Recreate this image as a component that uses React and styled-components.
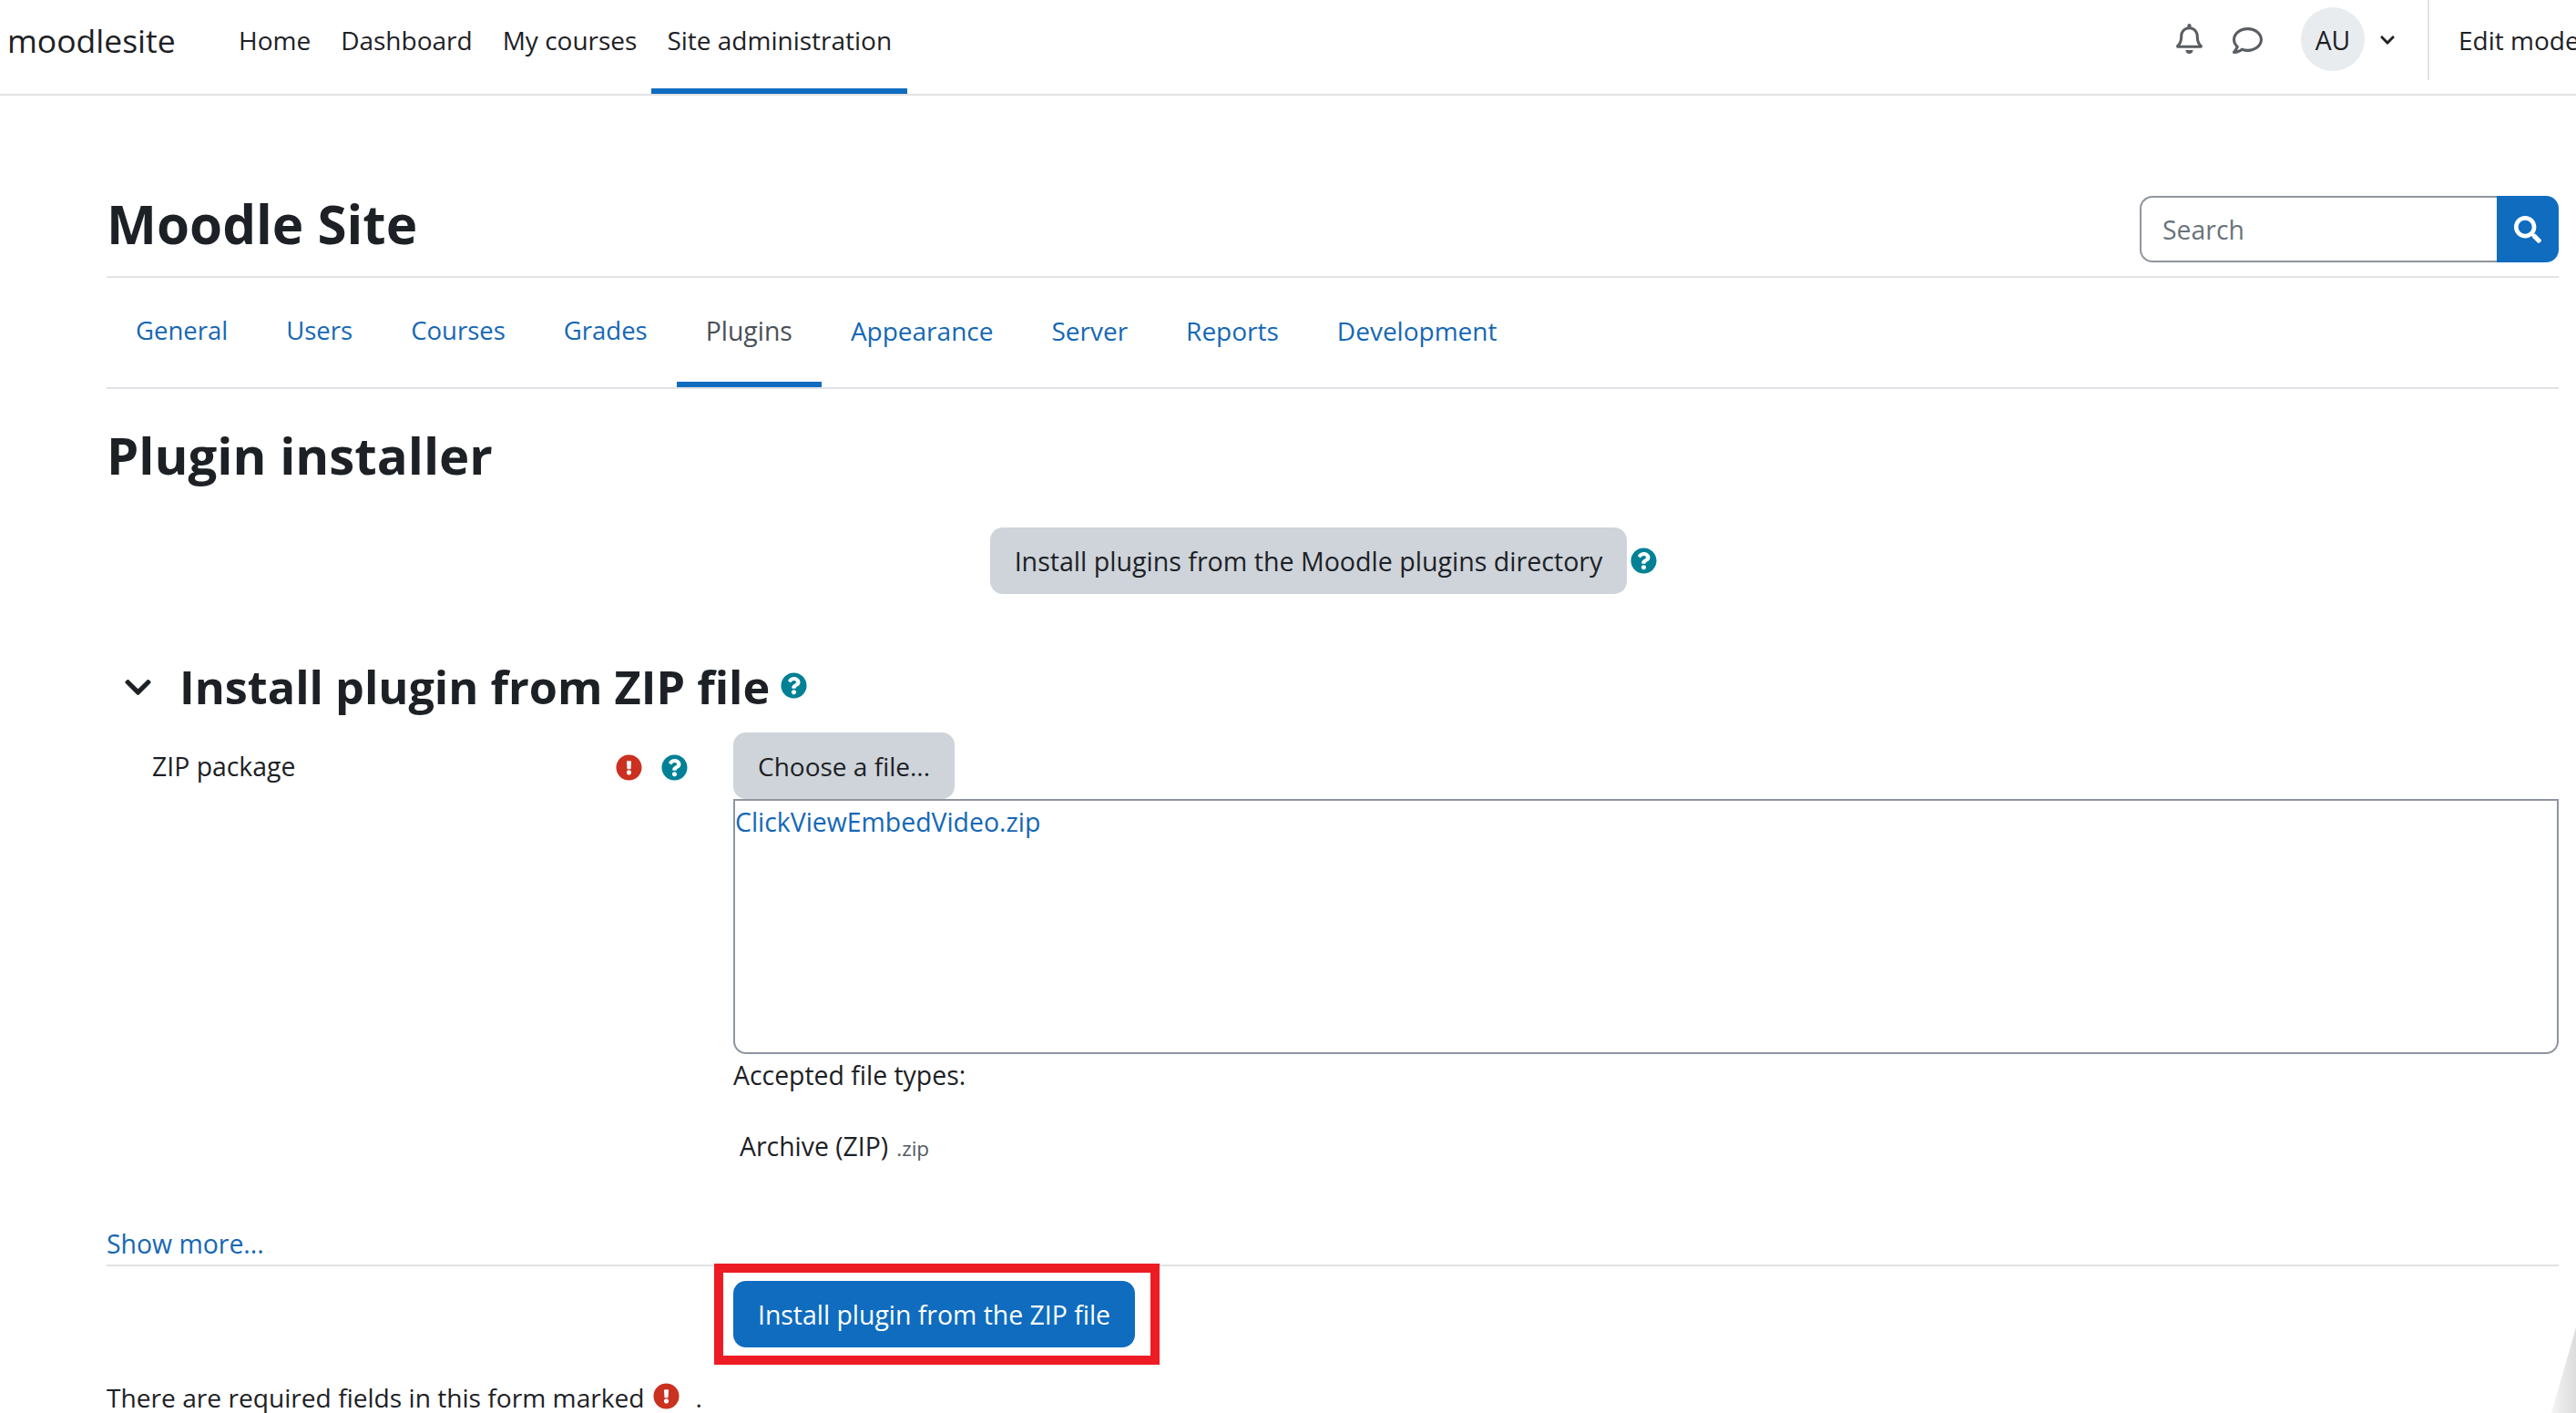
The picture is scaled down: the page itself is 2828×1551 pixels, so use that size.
import React from 'react';
import styled, { createGlobalStyle } from 'styled-components';
import { FaChevronDown, FaExclamationCircle, FaQuestionCircle, FaRegBell, FaRegComment, FaSearch } from 'react-icons/fa';

const Global = createGlobalStyle`
  html, body { margin: 0; padding: 0; background: #fff; }
  body { font-family: "Open Sans", "Noto Sans", sans-serif; font-size: 28.4px; color: #1d2125; overflow: hidden; }
  * { box-sizing: border-box; }
`;

const Page = styled.div`
  position: relative;
  width: 2828px;
  height: 1551px;
  overflow: hidden;
  background: #fff;
`;

const Header = styled.header`
  display: flex;
  height: 105px;
  padding-left: 8px;
  border-bottom: 2px solid #e3e3e3;
`;

const Brand = styled.a`
  width: 237px;
  flex: none;
  font-size: 35.5px;
  line-height: 88px;
`;

const NavList = styled.nav`
  display: flex;
  flex: 1;
`;

const NavItem = styled.a`
  height: 103px;
  padding: 0 17px;
  margin-right: ${p => (p.$active ? 0 : '-1px')};
  font-size: 28px;
  line-height: 88px;
  white-space: nowrap;
  box-shadow: ${p => (p.$active ? 'inset 0 -6px 0 #0f6cbf' : 'none')};
`;

const UserArea = styled.div`
  display: flex;
  align-items: center;
  flex: none;
  width: 440px;
  height: 88px;
  overflow: hidden;
`;

const Bell = styled(FaRegBell)`
  flex: none;
  width: 29px;
  height: 33px;
  margin: -3px 33px 0 1px;
  color: #5a5d61;
`;

const Chat = styled(FaRegComment)`
  flex: none;
  width: 33px;
  height: 33px;
  margin-right: 42px;
  color: #5a5d61;
`;

const Avatar = styled.div`
  display: flex;
  flex: none;
  align-items: center;
  justify-content: center;
  width: 70px;
  height: 70px;
  margin: -2px 17px 0 0;
  padding-top: 2px;
  border-radius: 50%;
  background: #e9ecef;
`;

const Caret = styled(FaChevronDown)`
  flex: none;
  width: 16px;
  height: 18px;
  margin-right: 36px;
  color: #1d2125;
`;

const Divider = styled.span`
  flex: none;
  width: 2px;
  height: 88px;
  margin-right: 32px;
  background: #e3e3e3;
`;

const EditMode = styled.span`
  flex: none;
  font-size: 28px;
  white-space: nowrap;
  line-height: 88px;
`;

const Main = styled.main`
  padding: 0 19px 0 117px;
`;

const TitleRow = styled.div`
  display: flex;
  align-items: flex-end;
  justify-content: space-between;
  height: 200px;
  padding-bottom: 15px;
  border-bottom: 2px solid #e3e3e3;
`;

const SiteTitle = styled.h1`
  margin: 0 0 4px;
  font-size: 58.3px;
  font-weight: 700;
  line-height: 76px;
`;

const SearchForm = styled.form`
  display: flex;
  width: 460px;
  height: 73px;
`;

const SearchInput = styled.input`
  width: 392px;
  height: 73px;
  padding: 0 0 0 23px;
  border: 2px solid #8f959e;
  border-right: 0;
  border-radius: 14px 0 0 14px;
  font: inherit;
  &::placeholder { color: #6a737b; opacity: 1; }
`;

const SearchButton = styled.button`
  display: flex;
  align-items: center;
  justify-content: center;
  width: 68px;
  height: 73px;
  padding: 0;
  border: 0;
  border-radius: 0 14px 14px 0;
  background: #0f6cbf;
  color: #fff;
`;

const SearchGlyph = styled(FaSearch)`
  width: 30px;
  height: 30px;
`;

const Tabs = styled.nav`
  display: flex;
  height: 122px;
  border-bottom: 2px solid #e0e2e5;
`;

const Tab = styled.a`
  height: 120px;
  padding: 0 32px;
  font-size: ${p => p.$size || 28}px;
  line-height: 116px;
  color: ${p => (p.$active ? '#495057' : '#1567b5')};
  box-shadow: ${p => (p.$active ? 'inset 0 -6px 0 #0f6cbf' : 'none')};
`;

const PageHeading = styled.h2`
  margin: 42px 0 50px;
  font-size: 56.3px;
  font-weight: 700;
  line-height: 60px;
`;

const DirectoryRow = styled.div`
  display: flex;
  align-items: center;
  justify-content: center;
  padding-right: 20px;
`;

const Button = styled.button`
  display: block;
  height: 73px;
  padding: 0 27px;
  border: 0;
  border-radius: 14px;
  background: ${p => (p.$primary ? '#0f6cbf' : '#ced4da')};
  color: ${p => (p.$primary ? '#fff' : '#1d2125')};
  font: inherit;
  font-size: ${p => p.$size}px;
  white-space: nowrap;
`;

const Help = styled(FaQuestionCircle)`
  flex: none;
  width: 29px;
  height: 29px;
  margin-left: ${p => p.$left || 0}px;
  color: #008196;
`;

const Required = styled(FaExclamationCircle)`
  flex: none;
  width: 29px;
  height: 29px;
  color: #ca3120;
`;

const SectionHeading = styled.h3`
  display: flex;
  align-items: center;
  height: 60px;
  margin: 72px 0 20px;
  font-size: 50.4px;
  font-weight: 700;
  line-height: 60px;
`;

const Collapse = styled(FaChevronDown)`
  flex: none;
  width: 29px;
  height: 33px;
  margin: 0 31px 0 20px;
`;

const SectionHelp = styled(Help)`
  margin: -3px 0 0 12px;
`;

const FormRow = styled.div`
  display: grid;
  grid-template-columns: 688px 1fr;
`;

const FieldLabel = styled.div`
  display: flex;
  align-items: center;
  justify-content: space-between;
  height: 73px;
  padding: 1px 50px 0;
  line-height: 70px;
`;

const LabelIcons = styled.span`
  display: flex;
  gap: 21px;
  margin-top: 2px;
`;

const FileBox = styled.div`
  height: 280px;
  border: 2px solid #8f959e;
  border-radius: 0 0 14px 14px;
  line-height: 46px;
`;

const Link = styled.a`
  color: #1567b5;
`;

const AcceptedLabel = styled.div`
  line-height: 46px;
`;

const AcceptedType = styled.div`
  margin-top: 32px;
  padding-left: 7px;
  line-height: 46px;
`;

const Ext = styled.small`
  margin-left: 9px;
  font-size: 22.5px;
  line-height: 1;
  color: #555b61;
`;

const MoreRow = styled.div`
  height: 47px;
  margin-top: 62px;
  border-bottom: 2px solid #e0e2e5;
  line-height: 44px;
`;

const SubmitRow = styled.div`
  margin: 16px 0 0 688px;
`;

const Highlight = styled.div`
  position: relative;
  width: fit-content;
  &::after {
    content: '';
    position: absolute;
    inset: -19px -27px -19px -21px;
    border: 10px solid #ed1c24;
    pointer-events: none;
  }
`;

const Note = styled.p`
  display: flex;
  align-items: center;
  height: 40px;
  margin: 35px 0 0;
  font-size: 28.15px;
  line-height: 40px;
  white-space: nowrap;
`;

const NoteIcon = styled(Required)`
  margin: -4px 18px 0 9px;
`;

const Corner = styled.div`
  position: absolute;
  right: 0;
  bottom: 0;
  width: 27px;
  height: 94px;
  background: linear-gradient(90deg, #f4f4f4, #dcdcdc);
  clip-path: polygon(100% 0, 100% 100%, 0 100%);
`;

export default function App() {
  return (
    <Page>
      <Global />
      <Header>
        <Brand>moodlesite</Brand>
        <NavList>
          <NavItem>Home</NavItem>
          <NavItem>Dashboard</NavItem>
          <NavItem>My courses</NavItem>
          <NavItem $active>Site administration</NavItem>
        </NavList>
        <UserArea>
          <Bell />
          <Chat />
          <Avatar>AU</Avatar>
          <Caret />
          <Divider />
          <EditMode>Edit mode</EditMode>
        </UserArea>
      </Header>
      <Main>
        <TitleRow>
          <SiteTitle>Moodle Site</SiteTitle>
          <SearchForm>
            <SearchInput placeholder="Search" />
            <SearchButton type="button" aria-label="Search"><SearchGlyph /></SearchButton>
          </SearchForm>
        </TitleRow>
        <Tabs>
          <Tab $size={27.5}>General</Tab>
          <Tab $size={27.5}>Users</Tab>
          <Tab $size={27.5}>Courses</Tab>
          <Tab $size={27.5}>Grades</Tab>
          <Tab $active $size={28.4}>Plugins</Tab>
          <Tab>Appearance</Tab>
          <Tab>Server</Tab>
          <Tab>Reports</Tab>
          <Tab>Development</Tab>
        </Tabs>
        <PageHeading>Plugin installer</PageHeading>
        <DirectoryRow>
          <Button type="button" $size={28.6}>Install plugins from the Moodle plugins directory</Button>
          <Help $left={4} />
        </DirectoryRow>
        <SectionHeading>
          <Collapse />
          Install plugin from ZIP file
          <SectionHelp />
        </SectionHeading>
        <FormRow>
          <FieldLabel>
            ZIP package
            <LabelIcons><Required /><Help /></LabelIcons>
          </FieldLabel>
          <div>
            <Button type="button" $size={28}>Choose a file...</Button>
            <FileBox><Link>ClickViewEmbedVideo.zip</Link></FileBox>
            <AcceptedLabel>Accepted file types:</AcceptedLabel>
            <AcceptedType>Archive (ZIP)<Ext>.zip</Ext></AcceptedType>
          </div>
        </FormRow>
        <MoreRow><Link>Show more...</Link></MoreRow>
        <SubmitRow>
          <Highlight><Button type="button" $primary $size={28.4}>Install plugin from the ZIP file</Button></Highlight>
        </SubmitRow>
        <Note>There are required fields in this form marked<NoteIcon />.</Note>
      </Main>
      <Corner />
    </Page>
  );
}
